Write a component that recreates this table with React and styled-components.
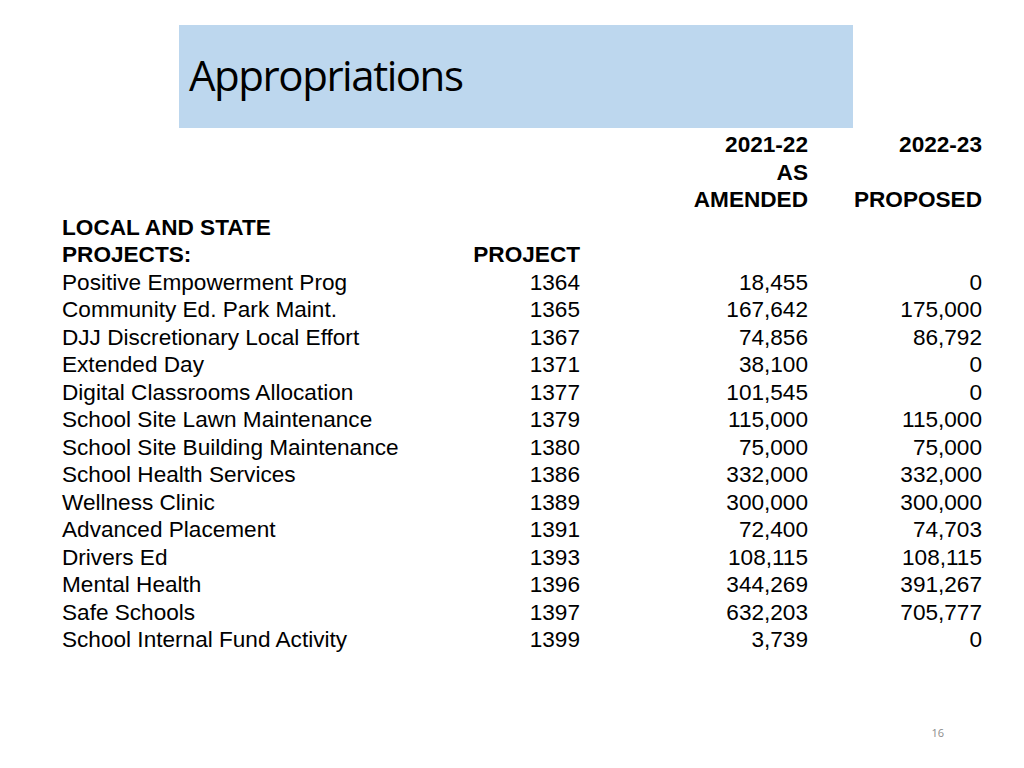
import React from "react";
import styled, { createGlobalStyle } from "styled-components";

const Global = createGlobalStyle`
  html, body { margin: 0; padding: 0; background: #fff; }
  body { font-family: "Liberation Sans", Arial, sans-serif; color: #000; }
`;

const Slide = styled.div`
  position: relative;
  width: 1024px;
  height: 768px;
  background: #fff;
  overflow: hidden;
  display: flex;
  flex-direction: column;
`;

const TitleBar = styled.div`
  margin: 25px 0 0 179px;
  width: 674px;
  height: 103px;
  background: #bdd7ee;
  display: flex;
  align-items: center;
  padding: 0 0 4px 10px;
  box-sizing: border-box;
`;

const Title = styled.h1`
  margin: 0;
  font-family: "Open Sans", sans-serif;
  font-weight: 400;
  font-size: 42px;
  letter-spacing: -1.45px;
  color: #000;
  line-height: 1;
`;

const Table = styled.div`
  margin: 3px 0 0 62px;
  display: grid;
  grid-template-columns: 400px 118px 228px 174px;
  grid-auto-rows: 27.5px;
  font-size: 22.6px;
  line-height: 27.5px;
`;

const Cell = styled.div`
  white-space: nowrap;
  text-align: ${(p) => (p.$right ? "right" : "left")};
  font-weight: ${(p) => (p.$bold ? 700 : 400)};
`;

const PageNum = styled.div`
  position: absolute;
  right: 80px;
  bottom: 28px;
  font-family: "Open Sans", sans-serif;
  font-size: 11px;
  color: #8b8b8b;
`;

const headers = [
  ["", "", "2021-22", "2022-23"],
  ["", "", "AS", ""],
  ["", "", "AMENDED", "PROPOSED"],
  ["LOCAL AND STATE", "", "", ""],
  ["PROJECTS:", "PROJECT", "", ""],
];

const rows = [
  ["Positive Empowerment Prog", "1364", "18,455", "0"],
  ["Community Ed. Park Maint.", "1365", "167,642", "175,000"],
  ["DJJ Discretionary Local Effort", "1367", "74,856", "86,792"],
  ["Extended Day", "1371", "38,100", "0"],
  ["Digital Classrooms Allocation", "1377", "101,545", "0"],
  ["School Site Lawn Maintenance", "1379", "115,000", "115,000"],
  ["School Site Building Maintenance", "1380", "75,000", "75,000"],
  ["School Health Services", "1386", "332,000", "332,000"],
  ["Wellness Clinic", "1389", "300,000", "300,000"],
  ["Advanced Placement", "1391", "72,400", "74,703"],
  ["Drivers Ed", "1393", "108,115", "108,115"],
  ["Mental Health", "1396", "344,269", "391,267"],
  ["Safe Schools", "1397", "632,203", "705,777"],
  ["School Internal Fund Activity", "1399", "3,739", "0"],
];

export default function App() {
  return (
    <>
      <Global />
      <Slide>
        <TitleBar>
          <Title>Appropriations</Title>
        </TitleBar>
        <Table>
          {headers.map((r, i) =>
            r.map((c, j) => (
              <Cell key={`h${i}-${j}`} $bold $right={j > 0}>
                {c}
              </Cell>
            ))
          )}
          {rows.map((r, i) =>
            r.map((c, j) => (
              <Cell key={`r${i}-${j}`} $right={j > 0}>
                {c}
              </Cell>
            ))
          )}
        </Table>
        <PageNum>16</PageNum>
      </Slide>
    </>
  );
}
